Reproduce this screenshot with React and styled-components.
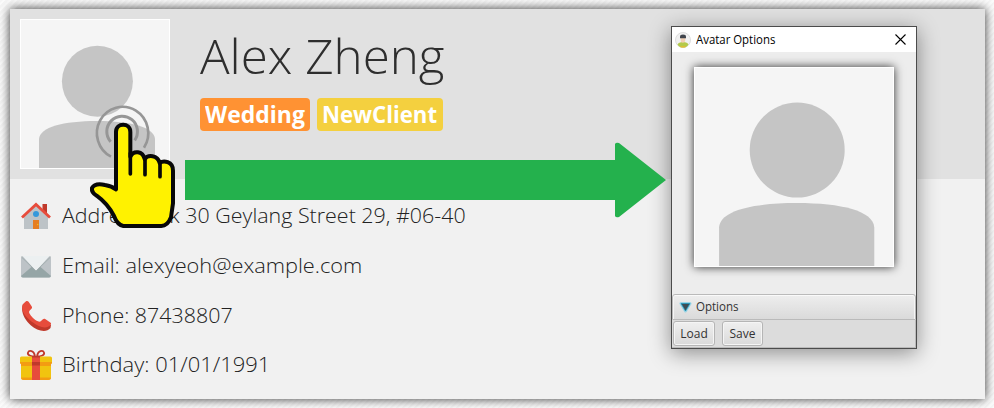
import React from "react";
import styled, { createGlobalStyle } from "styled-components";

const GlobalStyle = createGlobalStyle`
  * { box-sizing: border-box; }
  body { margin: 0; font-family: "Open Sans", "Noto Sans", sans-serif; overflow: hidden; }
`;

const Page = styled.div`
  position: relative;
  width: 994px;
  height: 408px;
  padding: 9px 9px 9px 10px;
  background: repeating-linear-gradient(135deg, #f6f6f6 0 1.5px, #fcfcfc 2.5px 4.24px);
`;

const Card = styled.main`
  height: 390px;
  background: #f1f1f1;
  box-shadow: 0 0 10px rgba(0, 0, 0, 0.8);
`;

const Header = styled.header`
  display: flex;
  gap: 30px;
  height: 170px;
  padding: 10px;
  background: #e1e1e1;
`;

const Portrait = styled.svg`
  display: block;
  flex: none;
  width: ${(p) => p.$size}px;
  height: ${(p) => p.$size}px;
  border: 1px solid #fff;
  background: #f5f5f5;
  box-shadow: ${(p) => (p.$raised ? "0 0 9px rgba(0,0,0,.8)" : "none")};
`;

const Identity = styled.div`
  display: flex;
  flex-direction: column;
`;

const Name = styled.h1`
  margin: 0;
  height: 79px;
  font-size: 48px;
  font-weight: 300;
  line-height: 73px;
  color: #2e2e2e;
  white-space: nowrap;
`;

const Fit = styled.span`
  display: inline-block;
  white-space: pre;
  transform: scaleX(${(p) => p.$x});
  transform-origin: left;
`;

const Tags = styled.div`
  display: flex;
  gap: 7px;
`;

const Tag = styled.span`
  width: ${(p) => p.$width}px;
  height: 33px;
  padding-left: 5px;
  border-radius: 4px;
  background: ${(p) => p.$color};
  color: #fff;
  font-size: 22.5px;
  font-weight: 700;
  line-height: 33px;
`;

const Details = styled.ul`
  margin: 0;
  padding: 13px 10px 0;
  list-style: none;
`;

const Detail = styled.li`
  display: flex;
  align-items: center;
  gap: 10px;
  height: 49.7px;
  padding-bottom: 1px;
  color: #222;
  font-size: 21px;
  font-weight: 320;
  line-height: 28px;

  svg { flex: none; width: 32px; height: 32px; }
  span { padding-bottom: 2px; }
`;

const ArrowLayer = styled.svg`
  position: absolute;
  left: 185px;
  top: 142px;
  width: 482px;
  height: 76px;
`;

const HandLayer = styled.svg`
  position: absolute;
  left: 80px;
  top: 90px;
  width: 110px;
  height: 150px;
`;

const Dialog = styled.section`
  position: absolute;
  left: 671px;
  top: 26px;
  display: flex;
  flex-direction: column;
  width: 246px;
  height: 323px;
  border: 1px solid #4b4b4b;
  background: #ededed;
  box-shadow: 0 4px 20px rgba(0, 0, 0, 0.42);
  color: #000;
  font-size: 12px;
`;

const TitleBar = styled.div`
  display: flex;
  align-items: center;
  height: 25px;
  padding: 0 10px 0 3px;
  background: #fff;
`;

const Title = styled.span`
  flex: 1;
  padding-left: 5px;
  line-height: 23px;
`;

const Preview = styled.div`
  display: flex;
  justify-content: center;
  height: 241px;
  padding-top: 15px;
`;

const OptionsBar = styled.div`
  display: flex;
  align-items: center;
  height: 26px;
  margin-top: 1px;
  padding-left: 5px;
  border: 1px solid #bababa;
  border-radius: 3px 3px 0 0;
  background: linear-gradient(#eeeeee, #dadada);
  box-shadow: inset 0 1px #fafafa, inset 1px 0 #f5f5f5, inset -1px 0 #f5f5f5;
  color: #333;
  line-height: 22px;
`;

const Actions = styled.div`
  display: flex;
  flex: 1;
  gap: 7px;
  padding: 1px;
  border: solid #bababa;
  border-width: 0 1px 1px 0;
  background: #dcdcdc;
`;

const Button = styled.button`
  width: ${(p) => p.$width}px;
  height: 25px;
  padding: 0;
  border: 1px solid #b5b5b5;
  border-radius: 3px;
  background: linear-gradient(#efefef, #dadada);
  box-shadow: inset 0 0 0 1px #f5f5f5;
  color: #333;
  font: 12px/22px "Open Sans", "Noto Sans", sans-serif;
`;

function Silhouette({ size, raised }) {
  return (
    <Portrait $size={size} $raised={raised} viewBox="1 1 148 148" preserveAspectRatio="none">
      <circle cx="77.4" cy="62.3" r="35.5" fill="#c5c5c5" />
      <path d="M19 150V120C20 108 43 102 77 102S134 108 135 120V150Z" fill="#c5c5c5" />
    </Portrait>
  );
}

function HouseIcon() {
  return (
    <svg viewBox="0 0 32 32">
      <path d="M22.500 4h4.500v10l-4.500-4z" fill="#c0392b" />
      <path d="M4 16 16 5l12 11v13H4z" fill="#bdc3c7" />
      <path d="M2 17.500 16 4.500l14 13" fill="none" stroke="#e74c3c" strokeWidth="2.800" />
      <circle cx="16" cy="14" r="3" fill="#3498db" />
      <path d="M13 20h6v9h-6z" fill="#e67e22" />
      <circle cx="17.700" cy="24.500" r=".7" fill="#f1c40f" />
    </svg>
  );
}

function MailIcon() {
  return (
    <svg viewBox="0 0 32 32">
      <rect x="1" y="6" width="30" height="21.500" rx="2" fill="#bdc3c7" />
      <path d="M1 26 11.500 17h9L31 26Q30.500 27.500 29 27.500H3Q1.500 27.500 1 26" fill="#95a5a6" />
      <path d="m2.500 6 13.500 15L29.500 6z" fill="#ecf0f1" />
      <path d="m1.500 7 14.500 14L30.500 7" fill="none" stroke="#a1adae" strokeWidth="1" />
    </svg>
  );
}

function PhoneIcon() {
  return (
    <svg viewBox="0 0 32 32">
      <path d="M3 4C0 12 5 20 11 25.500c6 5 15 8 19.500 2.500l.500-3L12 20 5 9z" fill="#c0392b" />
      <path d="M3 4 6 1.200c1-.6 2-.3 2.600.6l3 4.400c.8 1.200.6 2-.4 2.800l-1.500 1.600c-.8.8-.8 1.700-.2 2.800 1.500 2.900 5.100 6.400 8.400 8 1.400.7 2.500.4 3.400-.6l1.600-1.600c.7-.7 1.500-.7 2.300-.2l5.100 3.400c.9.600 1 1.500.4 2.400-3.700 4.500-11.600 2.700-17.700-2.200C7 18-.4 11 3 4" fill="#e74c3c" />
    </svg>
  );
}

function GiftIcon() {
  return (
    <svg viewBox="0 0 32 32">
      <g fill="none" stroke="#c0392b" strokeWidth="1.800">
        <path d="M15 7.500C11 7.500 7 6 8 3.500s6-2.500 7 4" />
        <path d="M17 7.500c4 0 8-1.500 7-4s-6-2.500-7 4" />
      </g>
      <path d="M1 15h30v13q0 3-3 3H4q-3 0-3-3z" fill="#f1c40f" />
      <path d="M1 28.500h30q0 2.500-3 2.500H4q-3 0-3-2.500M1 15h30v2H1z" fill="#f39c12" />
      <rect y="7.500" width="32" height="7" rx="1.500" fill="#f1c40f" />
      <path d="M0 13h32v.8q0 1.500-2 1.500H2Q0 15.300 0 13.800z" fill="#f39c12" />
      <path d="M12 7.500h8V31h-8z" fill="#e74c3c" />
      <path d="M12 13h8v3.500h-8zM12 7h8v1.500h-8z" fill="#c0392b" />
    </svg>
  );
}

function UserBadge() {
  return (
    <svg width="16" height="16" viewBox="0 0 16 16">
      <circle cx="8" cy="8" r="7.500" fill="#f1f1f1" stroke="#ddd" />
      <path d="M2.500 12.500Q3.500 10 8 10t5.500 2.500Q12 15.500 8 15.500T2.500 12.500" fill="#b4ca4b" />
      <path d="M5.500 14h5v1.500h-5z" fill="#dfbd35" />
      <path d="M5.700 5.500h4.600v2.600a2.300 2.600 0 0 1-4.600 0z" fill="#f1cfb4" />
      <path d="M5 6.200V4.700Q5 2.500 8 2.500t3 2.200v1.500z" fill="#41454d" />
    </svg>
  );
}

const details = [
  { id: "address", Icon: HouseIcon, text: "Address: Blk 30 Geylang Street 29, #06-40", scale: 1.02 },
  { id: "email", Icon: MailIcon, text: "Email: alexyeoh@example.com", scale: 1.036 },
  { id: "phone", Icon: PhoneIcon, text: "Phone: 87438807", scale: 1.02 },
  { id: "birthday", Icon: GiftIcon, text: "Birthday: 01/01/1991", scale: 1.044 },
];

export default function App() {
  return (
    <>
      <GlobalStyle />
      <Page>
        <Card>
          <Header>
            <Silhouette size={150} />
            <Identity>
              <Name><Fit $x={1.027}>Alex Zheng</Fit></Name>
              <Tags>
                <Tag $width={110} $color="#ff9233"><Fit $x={1.02}>Wedding</Fit></Tag>
                <Tag $width={126} $color="#f4d03f"><Fit $x={0.985}>NewClient</Fit></Tag>
              </Tags>
            </Identity>
          </Header>
          <Details>
            {details.map(({ id, Icon, text, scale }) => (
              <Detail key={id}><Icon /><Fit $x={scale}>{text}</Fit></Detail>
            ))}
          </Details>
        </Card>

        <Dialog>
          <TitleBar>
            <UserBadge />
            <Title><Fit $x={0.95}>Avatar Options</Fit></Title>
            <svg width="11" height="11" viewBox="0 0 11 11">
              <path d="m.5.5 10 10m0-10-10 10" stroke="#000" strokeWidth="1.100" />
            </svg>
          </TitleBar>
          <Preview><Silhouette size={200} raised /></Preview>
          <OptionsBar>
            <svg width="15" height="16" viewBox="0 0 15 16">
              <path d="M3 4.500h9L7.500 12z" fill="#32b6df" stroke="#74cce6" strokeWidth="3" strokeLinejoin="round" opacity=".65" />
              <path d="M3 4.500h9L7.500 12z" fill="#3e4d55" stroke="#1595bd" strokeWidth=".7" />
            </svg>
            <Fit $x={0.96}>&nbsp;Options</Fit>
          </OptionsBar>
          <Actions>
            <Button $width={42}>Load</Button>
            <Button $width={41}>Save</Button>
          </Actions>
        </Dialog>

        <ArrowLayer viewBox="0 0 482 76">
          <path d="M0 18H430V2Q431 0 434 1L481 38 434 75Q431 76 430 74V58H0Z" fill="#24b14d" />
        </ArrowLayer>
        <HandLayer viewBox="0 0 330 450">
          <g fill="none" stroke="#969696">
            <path d="M93 200A77 79 0 1 1 192 173" strokeWidth="8" />
            <path d="M92 162A46 46 0 1 1 164 158" strokeWidth="9" transform="translate(0 -7)" />
          </g>
          <path d="M108 298V126C108 97 151 97 151 126V200C160 180 188 182 194 207C203 194 233 194 239 219C250 211 279 213 279 242V340L273 382Q263 408 244 408H130Q112 405 102 378C88 350 75 335 50 317Q34 308 36 294Q45 278 75 285Q95 288 108 298Z" fill="#fff200" stroke="#080808" strokeWidth="12" strokeLinejoin="round" />
          <path d="M151 190V252M195 205V254M240 218V260" fill="none" stroke="#080808" strokeWidth="11" strokeLinecap="round" />
        </HandLayer>
      </Page>
    </>
  );
}
